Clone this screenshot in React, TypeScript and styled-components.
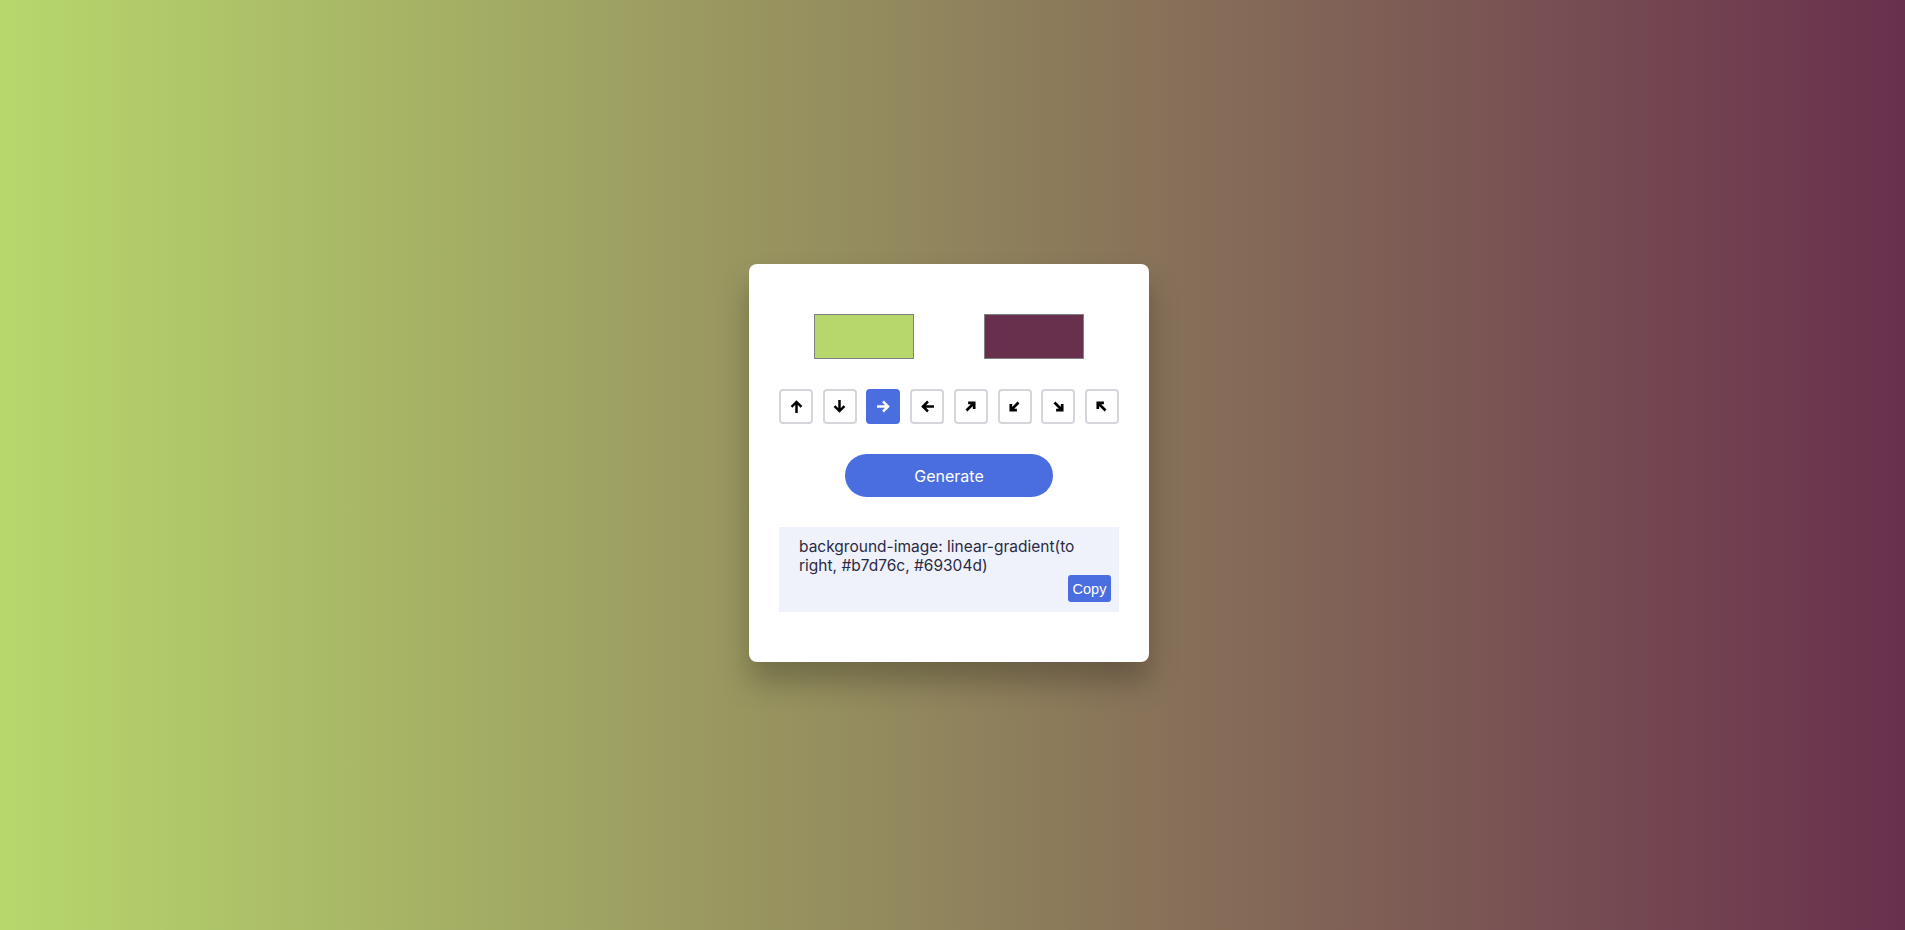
import React, { useState } from "react";
import styled, { createGlobalStyle } from "styled-components";

const Global = createGlobalStyle`
  html, body { margin: 0; padding: 0; height: 100%; }
  body {
    font-family: Inter, "Noto Sans", sans-serif;
  }
  #root { height: 100%; }
`;

const Page = styled.div<{ $c1: string; $c2: string; $dir: string }>`
  height: 930px;
  box-sizing: border-box;
  padding-right: 7px;
  display: flex;
  align-items: center;
  justify-content: center;
  background-image: linear-gradient(${(p) => p.$dir}, ${(p) => p.$c1}, ${(p) => p.$c2});
`;

const Card = styled.div`
  width: 400px;
  box-sizing: border-box;
  padding: 50px 30px;
  background: #ffffff;
  border-radius: 8px;
  box-shadow: 0 20px 30px rgba(0, 0, 0, 0.25);
  display: flex;
  flex-direction: column;
  gap: 30px;
  margin-top: -4px;
`;

const Swatches = styled.div`
  display: flex;
  justify-content: center;
  gap: 70px;
`;

const Swatch = styled.div<{ $color: string }>`
  width: 100px;
  height: 45px;
  box-sizing: border-box;
  border: 1px solid #808080;
  background: ${(p) => p.$color};
`;

const DirRow = styled.div`
  display: flex;
  justify-content: space-between;
`;

const DirButton = styled.button<{ $active: boolean }>`
  width: 34px;
  height: 35px;
  box-sizing: border-box;
  padding: 0;
  border-radius: 4px;
  border: 2px solid ${(p) => (p.$active ? "#4a6ee0" : "#d5d5dc")};
  background: ${(p) => (p.$active ? "#4a6ee0" : "#ffffff")};
  color: ${(p) => (p.$active ? "#ffffff" : "#000000")};
  display: flex;
  align-items: center;
  justify-content: center;
  cursor: pointer;
`;

const GenerateButton = styled.button`
  align-self: center;
  width: 208px;
  height: 43px;
  border: none;
  border-radius: 22px;
  background: #4a6ee0;
  color: #ffffff;
  font-family: Inter, "Noto Sans", sans-serif;
  font-size: 16px;
  font-weight: 400;
  cursor: pointer;
`;

const Result = styled.div`
  position: relative;
  height: 85px;
  box-sizing: border-box;
  padding: 10px 28px 0 20px;
  background: #eff2fb;
  color: #2b2a44;
  font-size: 15.5px;
  line-height: 19px;
  word-wrap: break-word;
`;

const CopyButton = styled.button`
  position: absolute;
  right: 8px;
  bottom: 10px;
  width: 43px;
  height: 27px;
  padding: 0;
  border: none;
  border-radius: 3px;
  background: #4a6ee0;
  color: #ffffff;
  font-family: "Liberation Sans", Arial, sans-serif;
  font-size: 14.5px;
  cursor: pointer;
`;

const Arrow = ({ angle }: { angle: number }) => (
  <svg width="13" height="13" viewBox="0 0 12 12" style={{ transform: `rotate(${angle}deg)` }}>
    <path
      d="M6 10.8V2.2 M2.2 5.6L6 1.8 9.8 5.6"
      fill="none"
      stroke="currentColor"
      strokeWidth="2.3"
      strokeLinecap="square"
      strokeLinejoin="miter"
    />
  </svg>
);

const Diag = ({ angle }: { angle: number }) => (
  <svg width="13" height="13" viewBox="0 0 12 12" style={{ transform: `rotate(${angle}deg)` }}>
    <path
      d="M2.3 9.7L9 3 M3.8 2.6H9.4V8.2"
      fill="none"
      stroke="currentColor"
      strokeWidth="2.5"
      strokeLinecap="butt"
      strokeLinejoin="miter"
    />
  </svg>
);

const directions = [
  { key: "to top", icon: <Arrow angle={0} /> },
  { key: "to bottom", icon: <Arrow angle={180} /> },
  { key: "to right", icon: <Arrow angle={90} /> },
  { key: "to left", icon: <Arrow angle={270} /> },
  { key: "to top right", icon: <Diag angle={0} /> },
  { key: "to bottom left", icon: <Diag angle={180} /> },
  { key: "to bottom right", icon: <Diag angle={90} /> },
  { key: "to top left", icon: <Diag angle={270} /> },
];

export default function App() {
  const [dir, setDir] = useState("to right");
  const c1 = "#b7d76c";
  const c2 = "#69304d";
  const code = `background-image: linear-gradient(${dir}, ${c1}, ${c2})`;
  return (
    <>
      <Global />
      <Page $c1={c1} $c2={c2} $dir={dir}>
        <Card>
          <Swatches>
            <Swatch $color={c1} />
            <Swatch $color={c2} />
          </Swatches>
          <DirRow>
            {directions.map((d) => (
              <DirButton key={d.key} $active={d.key === dir} onClick={() => setDir(d.key)}>
                {d.icon}
              </DirButton>
            ))}
          </DirRow>
          <GenerateButton>Generate</GenerateButton>
          <Result>
            {code}
            <CopyButton>Copy</CopyButton>
          </Result>
        </Card>
      </Page>
    </>
  );
}
